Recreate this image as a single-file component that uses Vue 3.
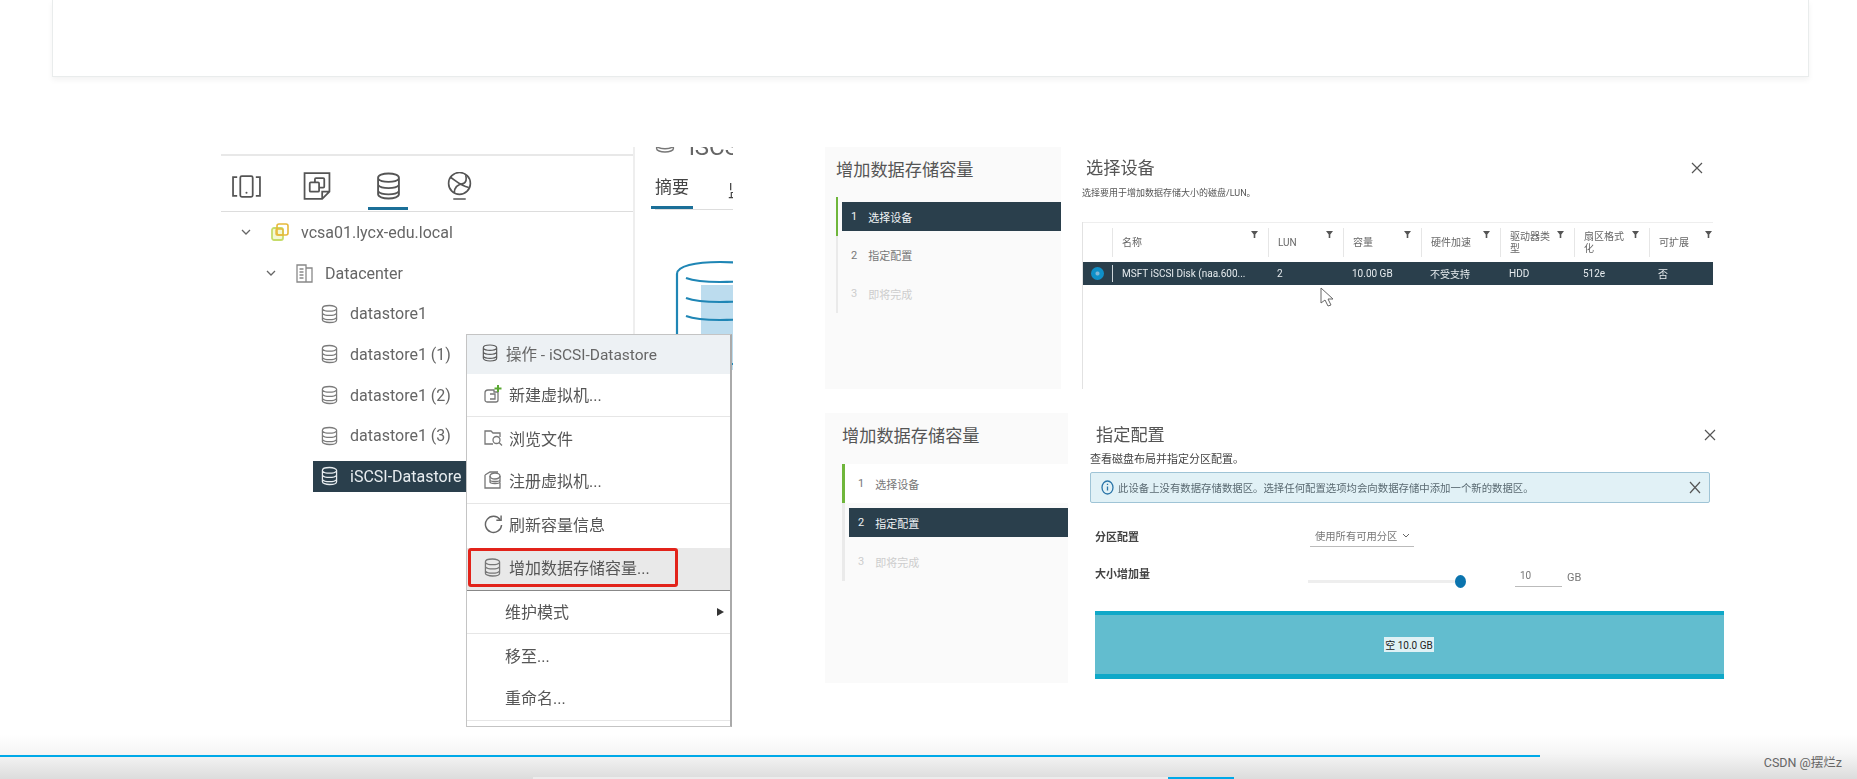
<template>
  <div class="page">
    <svg class="defs" width="0" height="0" aria-hidden="true">
      <defs>
        <symbol id="db" viewBox="0 0 24 26">
          <path d="M2 5c0-2.2 4.5-4 10-4s10 1.800 10 4v16c0 2.200-4.500 4-10 4s-10-1.800-10-4zM2 6c1.500 2 5.500 3 10 3s8.500-1 10-3M2 12c1.500 2 5.500 3 10 3s8.500-1 10-3M2 18c1.500 2 5.500 3 10 3s8.500-1 10-3" fill="none" stroke="currentColor" stroke-width="1.800" />
        </symbol>
      </defs>
    </svg>

    <div class="top-card"></div>

    <div class="content">
      <section class="figure">
        <div class="nav-pane">
          <div class="icon-tabs">
            <span class="icon-tab">
              <svg width="29" height="23" viewBox="0 0 28 22" fill="none" stroke="#555" stroke-width="1.700">
                <path d="M5 2H1v18h4M23 2h4v18h-4" />
                <rect x="8" y="1" width="12" height="20" rx="1.500" />
                <circle cx="14" cy="17" r="1" fill="#555" stroke="none" />
              </svg>
            </span>
            <span class="icon-tab">
              <svg width="28" height="28" viewBox="0 0 26 27" fill="none" stroke="#555" stroke-width="1.700">
                <path d="M1 1h24v18l-7 7H1zM25 19h-7v7" />
                <rect x="11" y="6" width="9" height="9" rx="1" />
                <rect x="6" y="10" width="9" height="9" rx="1" fill="#fff" />
              </svg>
            </span>
            <span class="icon-tab active"><svg class="ic-tab-db"><use href="#db" /></svg></span>
            <span class="icon-tab">
              <svg width="25" height="28" viewBox="0 0 24 27" fill="none" stroke="#555" stroke-width="1.600">
                <circle cx="12" cy="11" r="10.500" />
                <path d="M3 5c4 2 9 8 18 10M7 20c0-5 3-8 9-9 2-1 3-4 2-8M6 26h12" />
              </svg>
            </span>
          </div>

          <ul class="tree">
            <li class="tree-row lvl0">
              <svg class="chev" width="10" height="6" viewBox="0 0 10 6"><path d="M1 1l4 4 4-4" fill="none" stroke="#666" stroke-width="1.300" /></svg>
              <svg class="tree-ic" width="18" height="18" viewBox="0 0 18 18" fill="none">
                <rect x="1" y="5" width="11" height="12" rx="2" fill="#f3f8d4" stroke="#c6dc6a" stroke-width="1.800" />
                <rect x="6" y="1" width="11" height="11" rx="2" stroke="#e6b93a" stroke-width="1.600" />
                <rect x="5" y="6" width="7" height="6" rx="1" stroke="#e6b93a" stroke-width="1.300" />
              </svg>
              <span>vcsa01.lycx-edu.local</span>
            </li>
            <li class="tree-row lvl1">
              <svg class="chev" width="10" height="6" viewBox="0 0 10 6"><path d="M1 1l4 4 4-4" fill="none" stroke="#666" stroke-width="1.300" /></svg>
              <svg class="tree-ic" width="17" height="19" viewBox="0 0 17 19" fill="none" stroke="#888" stroke-width="1.300">
                <path d="M1 1h9v17H1zM10 4h6v14h-6M3.500 5h4M3.500 8h4M3.500 11h4M3.500 14h4" />
              </svg>
              <span>Datacenter</span>
            </li>
            <li v-for="d in datastores" :key="d" class="tree-row lvl2" :class="{ selected: d === 'iSCSI-Datastore' }">
              <span class="tree-label">
                <svg class="ic-db"><use href="#db" /></svg>
                <span>{{ d }}</span>
              </span>
            </li>
          </ul>
        </div>

        <div class="detail-pane">
          <div class="detail-title">
            <svg class="ic-title"><use href="#db" /></svg>
            <span>iSCSI</span>
          </div>
          <div class="detail-tabs">
            <span class="detail-tab">摘要</span>
            <span class="detail-tab-cut">监</span>
          </div>
          <div class="big-db">
            <svg width="90" height="110" viewBox="0 0 90 110" fill="none" stroke="#1f86b5" stroke-width="2.200">
              <rect x="26" y="25" width="48" height="85" fill="#bcdcee" stroke="none" />
              <path d="M2 14C2 6 20 2 45 2s43 4 43 12v90H2zM11 18c8 3 20 4 34 4s26-1 34-4M11 38c8 3 20 4 34 4s26-1 34-4M11 56c8 3 20 4 34 4s26-1 34-4" />
            </svg>
          </div>
        </div>

        <div class="menu">
          <div class="menu-head">
            <svg class="ic-menu-head"><use href="#db" /></svg>
            <span>操作 - iSCSI-Datastore</span>
          </div>
          <div class="menu-row sep">
            <svg class="menu-ic" width="19" height="19" viewBox="0 0 19 19" fill="none" stroke="#777" stroke-width="1.300">
              <path d="M4 6h6v2h4v8a2 2 0 0 1-2 2H3a2 2 0 0 1-2-2V9a3 3 0 0 1 3-3zM6 10h5v5H6" />
              <path d="M14 1v7M10.500 4.500h7" stroke="#5aa832" stroke-width="2" />
            </svg>
            <span>新建虚拟机...</span>
          </div>
          <div class="menu-row">
            <svg class="menu-ic" width="19" height="18" viewBox="0 0 19 18" fill="none" stroke="#777" stroke-width="1.300">
              <path d="M9 15H1V2h6l2 2h7v4" />
              <circle cx="12.500" cy="11" r="3.500" />
              <path d="M15 13.500l3 3" />
            </svg>
            <span>浏览文件</span>
          </div>
          <div class="menu-row sep">
            <svg class="menu-ic" width="19" height="19" viewBox="0 0 19 19" fill="none" stroke="#777" stroke-width="1.300">
              <path d="M1 4l5-3h8M1 4v13h11M16 12v5h-4" />
              <ellipse cx="11" cy="5" rx="5" ry="3" />
              <path d="M6 5v6c0 2 10 2 10 0V5M6 9c0 2 10 2 10 0" />
            </svg>
            <span>注册虚拟机...</span>
          </div>
          <div class="menu-row">
            <svg class="menu-ic" width="20" height="20" viewBox="0 0 20 20" fill="none" stroke="#666" stroke-width="1.500">
              <path d="M17 5.500A8.500 8.500 0 1 0 18.500 11" />
              <path d="M18 1v5h-5" />
            </svg>
            <span>刷新容量信息</span>
          </div>
          <div class="menu-row hot">
            <svg class="ic-menu"><use href="#db" /></svg>
            <span>增加数据存储容量...</span>
            <i class="red-box"></i>
          </div>
          <div class="menu-row plain sep">
            <span>维护模式</span>
            <i class="arrow"></i>
          </div>
          <div class="menu-row plain"><span>移至...</span></div>
          <div class="menu-row plain sep"><span>重命名...</span></div>
        </div>
      </section>

      <div class="wizards">
        <section class="wizard wizard-a">
          <aside class="steps-panel">
            <h3>增加数据存储容量</h3>
            <div class="steps">
              <div v-for="(s, i) in steps" :key="s" class="step" :class="{ green: i === 0, faded: i === 2 }">
                <span class="step-label" :class="{ current: i === 0 }">{{ i + 1 }}<b>{{ s }}</b></span>
              </div>
            </div>
          </aside>
          <div class="wizard-body">
            <div class="body-head">
              <h3>选择设备</h3>
              <svg class="close" width="12" height="12" viewBox="0 0 12 12"><path d="M1 1l10 10M11 1L1 11" stroke="#555" stroke-width="1.200" /></svg>
            </div>
            <p class="sub">选择要用于增加数据存储大小的磁盘/LUN。</p>
            <div class="table">
              <div class="t-head">
                <div class="t-cell radio-col"></div>
                <div v-for="c in columns" :key="c" class="t-cell">
                  <span>{{ c }}</span>
                  <svg class="filter" width="7" height="7" viewBox="0 0 7 7"><path d="M0 0h7L4.300 3.500V7H2.700V3.500z" fill="#555" /></svg>
                </div>
              </div>
              <div class="t-row">
                <div class="t-cell radio-col"><i class="radio"></i></div>
                <div v-for="(v, i) in rowCells" :key="i" class="t-cell" :class="{ bar: i === 0 }">{{ v }}</div>
              </div>
            </div>
            <svg class="cursor" width="16" height="21" viewBox="0 0 16 21" fill="#fff" stroke="#666" stroke-width="1">
              <path d="M1 1v15l4-3 3 6 3-1-3-6h5z" />
            </svg>
          </div>
        </section>

        <section class="wizard wizard-b">
          <aside class="steps-panel">
            <h3>增加数据存储容量</h3>
            <div class="steps">
              <div v-for="(s, i) in steps" :key="s" class="step" :class="{ green: i === 0, faded: i === 2 }">
                <span class="step-label" :class="{ current: i === 1 }">{{ i + 1 }}<b>{{ s }}</b></span>
              </div>
            </div>
          </aside>
          <div class="wizard-body">
            <div class="body-head">
              <h3>指定配置</h3>
              <svg class="close" width="12" height="12" viewBox="0 0 12 12"><path d="M1 1l10 10M11 1L1 11" stroke="#555" stroke-width="1.200" /></svg>
            </div>
            <p class="sub strong">查看磁盘布局并指定分区配置。</p>
            <div class="alert">
              <svg width="13" height="15" viewBox="0 0 13 15" fill="none" stroke="#2b75a8" stroke-width="1.300">
                <ellipse cx="6.500" cy="7.500" rx="5.500" ry="6.500" />
                <path d="M6.500 6.500v4M6.500 3.700v1.200" />
              </svg>
              <span>此设备上没有数据存储数据区。选择任何配置选项均会向数据存储中添加一个新的数据区。</span>
              <svg class="alert-x" width="12" height="13" viewBox="0 0 12 13"><path d="M1 1l10 11M11 1L1 12" stroke="#555" stroke-width="1.200" /></svg>
            </div>
            <div class="form-row first">
              <label>分区配置</label>
              <div class="select">
                <span>使用所有可用分区</span>
                <svg width="8" height="5" viewBox="0 0 8 5"><path d="M1 1l3 3 3-3" fill="none" stroke="#666" /></svg>
              </div>
            </div>
            <div class="form-row second">
              <label>大小增加量</label>
              <div class="slider"><i></i></div>
              <div class="size-input"><span>10</span></div>
              <span class="unit">GB</span>
            </div>
            <div class="free-bar"><span>空 10.0 GB</span></div>
          </div>
        </section>
      </div>
    </div>

    <footer class="player">
      <div class="progress"><i></i></div>
      <div class="watermark">CSDN @摆烂z</div>
      <div class="scroll"><i></i></div>
    </footer>
  </div>
</template>

<script setup>
const datastores = ['datastore1', 'datastore1 (1)', 'datastore1 (2)', 'datastore1 (3)', 'iSCSI-Datastore']
const steps = ['选择设备', '指定配置', '即将完成']
const columns = ['名称', 'LUN', '容量', '硬件加速', '驱动器类型', '扇区格式化', '可扩展']
const rowCells = ['MSFT iSCSI Disk (naa.600...', '2', '10.00 GB', '不受支持', 'HDD', '512e', '否']
</script>

<style scoped>
.page {
  position: relative;
  width: 1857px;
  height: 779px;
  overflow: hidden;
  background: #fff;
  font-family: Roboto, "Noto Sans CJK SC", sans-serif;
  color: #565656;
}

.defs {
  position: absolute;
}

.top-card {
  height: 77px;
  margin: 0 48px 0 52px;
  box-sizing: border-box;
  border: 1px solid #e9ecec;
  border-top: none;
  box-shadow: 0 3px 6px rgba(0, 0, 0, 0.05);
}

.content {
  display: flex;
  height: 580px;
  margin-top: 70px;
  padding-left: 221px;
  filter: blur(0.55px);
}

/* left picture */
.figure {
  position: relative;
  display: flex;
  width: 512px;
  height: 580px;
  overflow: hidden;
}

.nav-pane {
  width: 414px;
  border-right: 2px solid #eee;
  height: 250px;
  flex: none;
  box-sizing: border-box;
}

.icon-tabs {
  display: flex;
  align-items: center;
  height: 58px;
  margin-top: 7px;
  border-top: 2px solid #e8e8e8;
  border-bottom: 1px solid #ddd;
  box-sizing: border-box;
  padding: 5px 0 0 10px;
}

.icon-tab {
  position: relative;
  display: flex;
  justify-content: center;
  width: 30px;
  margin-right: 41px;
}

.icon-tab.active::after {
  content: "";
  position: absolute;
  left: -5px;
  right: -5px;
  bottom: -10px;
  height: 3px;
  background: #1b6f98;
}

.ic-tab-db {
  width: 25px;
  height: 28px;
  color: #555;
}

.tree {
  list-style: none;
  margin: 0;
  padding: 0;
  font-size: 16px;
  color: #666;
}

.tree-row {
  display: flex;
  align-items: center;
  height: 40.7px;
  white-space: nowrap;
}

.lvl0 {
  padding-left: 20px;
}

.lvl1 {
  padding-left: 45px;
}

.lvl2 {
  padding-left: 92px;
}

.chev {
  margin-right: 20px;
}

.tree-ic {
  margin-right: 12px;
}

.tree-label {
  display: flex;
  align-items: center;
  height: 31px;
  width: 153px;
  padding-left: 8px;
  box-sizing: border-box;
}

.ic-db {
  width: 17px;
  height: 20px;
  margin-right: 12px;
  color: #7b7b7b;
  flex: none;
}

.selected .tree-label {
  background: #2a3f4c;
  color: #e8edf0;
}

.selected .ic-db {
  color: #e8edf0;
}

.detail-pane {
  flex: 1;
  overflow: hidden;
  padding-left: 20px;
}

.detail-title {
  display: flex;
  align-items: flex-end;
  height: 8px;
  overflow: hidden;
  font-size: 24px;
  line-height: 1;
  color: #666;
}

.detail-title span {
  margin-left: 14px;
  flex: none;
  transform: translateY(4px);
}

.ic-title {
  width: 20px;
  height: 26px;
  flex: none;
  color: #777;
}

.detail-tabs {
  display: flex;
  height: 55px;
  border-bottom: 1px solid #ddd;
  box-sizing: border-box;
  font-size: 17px;
  color: #444;
  white-space: nowrap;
}

.detail-tab {
  display: flex;
  align-items: flex-end;
  flex: none;
  height: 54px;
  margin-left: -4px;
  padding: 0 4px 8px;
  box-sizing: border-box;
  border-bottom: 3px solid #1b6f98;
}

.detail-tab-cut {
  margin: 22px 0 0 35px;
  flex: none;
}

.big-db {
  margin: 50px 0 0 20px;
  width: 90px;
}

.menu {
  position: absolute;
  left: 245px;
  top: 187px;
  width: 266px;
  height: 393px;
  box-sizing: border-box;
  background: #fff;
  border: 1px solid #c4c4c4;
  border-right: 2px solid #aaa;
  font-size: 16px;
  overflow: hidden;
}

.menu-head {
  display: flex;
  align-items: center;
  height: 39px;
  padding: 0 0 3px 15px;
  box-sizing: border-box;
  background: #edf1f4;
  font-size: 15.500px;
  color: #666;
}

.ic-menu-head {
  width: 16px;
  height: 20px;
  margin-right: 8px;
  color: #5c5c5c;
}

.menu-row {
  position: relative;
  display: flex;
  align-items: center;
  height: 43.4px;
  padding: 0 0 3px 17px;
  box-sizing: border-box;
  white-space: nowrap;
}

.menu-row.sep {
  border-bottom: 1px solid #e6e6e6;
}

.menu-ic {
  width: 19px;
  margin-right: 6px;
  flex: none;
}

.ic-menu {
  width: 17px;
  height: 19px;
  margin-right: 8px;
  color: #777;
  flex: none;
}

.hot {
  background: #e9e9e9;
  border-bottom: 1px solid #888;
}

.red-box {
  position: absolute;
  left: 1px;
  top: 0;
  width: 210px;
  height: 39px;
  box-sizing: border-box;
  border: 3.500px solid #e2231a;
  border-radius: 3px;
}

.plain {
  padding-left: 38px;
}

.arrow {
  position: absolute;
  right: 6px;
  top: 17px;
  border-left: 7px solid #333;
  border-top: 4px solid transparent;
  border-bottom: 4px solid transparent;
}

/* right pictures */
.wizards {
  display: flex;
  flex-direction: column;
  gap: 24px;
  margin-left: 92px;
  width: 899px;
}

.wizard {
  display: flex;
}

.wizard-a {
  height: 242px;
}

.wizard-b {
  height: 270px;
}

.steps-panel {
  flex: none;
  background: #fafafa;
  box-sizing: border-box;
}

.wizard-a .steps-panel {
  width: 236px;
  padding: 12px 0 0 11px;
}

.wizard-b .steps-panel {
  width: 243px;
  padding: 12px 0 0 17px;
}

.steps-panel h3,
.body-head h3 {
  margin: 0;
  font-size: 17.200px;
  line-height: 22px;
  font-weight: 400;
  color: #555;
}

.steps {
  margin-top: 16px;
}

.wizard-b .steps {
  margin-top: 17px;
}

.step {
  height: 38.5px;
  border-left: 2px solid #eaeaea;
  box-sizing: border-box;
  padding-top: 5px;
}

.wizard-b .step {
  height: 39px;
  border-left-width: 3px;
}

.wizard-b .step.green {
  background: #fff;
}

.step.green {
  border-left-color: #6fb63b;
}

.step-label {
  display: flex;
  align-items: center;
  height: 29px;
  margin-left: 4px;
  padding-left: 9px;
  font-size: 11px;
  color: #777;
}

.step-label b {
  margin-left: 11px;
  font-weight: 400;
}

.step-label.current {
  background: #2a3f4c;
  color: #f0f3f5;
}

.step.faded .step-label {
  color: #cdcdcd;
}

.wizard-body {
  position: relative;
  flex: 1;
}

.body-head {
  display: flex;
  justify-content: space-between;
  align-items: center;
}

.wizard-a .wizard-body {
  padding: 10px 0 0 21px;
  box-sizing: border-box;
  width: 652px;
  flex: none;
}

.wizard-a .body-head {
  padding: 0 10px 0 4px;
}

.wizard-b .wizard-body {
  padding: 11px 0 0 22px;
  box-sizing: border-box;
  width: 656px;
  flex: none;
}

.wizard-b .body-head {
  padding: 0 8px 0 6px;
}

.sub {
  margin: 7px 0 0;
  font-size: 9px;
  line-height: 14px;
  color: #555;
}

.sub.strong {
  font-size: 11px;
  margin-top: 7px;
  color: #444;
}

.table {
  margin-top: 22px;
  width: 631px;
  height: 167px;
  border-left: 1px solid #e2e2e2;
  box-sizing: border-box;
  font-size: 10px;
  overflow: hidden;
}

.t-head,
.t-row {
  display: grid;
  grid-template-columns: 29px 156px 75px 78px 79px 74px 75px 64px;
}

.t-head {
  height: 40px;
  border-top: 1px solid #eee;
  box-sizing: border-box;
  color: #666;
  padding-top: 5px;
}

.t-head .t-cell {
  display: flex;
  justify-content: space-between;
  gap: 4px;
  align-items: center;
  height: 29px;
  padding: 0 10px 0 9px;
  box-sizing: border-box;
  border-left: 1px solid #e6e6e6;
  line-height: 12px;
  position: relative;
}

.t-head .radio-col {
  border-left: none;
}

.t-head .t-cell:last-child {
  padding-right: 1px;
}

.filter {
  flex: none;
  align-self: flex-start;
  margin-top: 3px;
}

.t-row {
  height: 23px;
  align-items: center;
  background: #2a3f4c;
  color: #e6ebee;
}

.t-row .t-cell {
  padding-left: 9px;
  white-space: nowrap;
  overflow: hidden;
  display: flex;
  align-items: center;
  height: 17px;
  box-sizing: border-box;
}

.t-row .t-cell.bar {
  border-left: 1px solid #cfd6da;
}

.t-row .radio-col {
  padding-left: 8px;
}

.radio {
  width: 13px;
  height: 13px;
  border-radius: 50%;
  background: radial-gradient(circle, #7fb6d6 0 1.5px, #0f90c8 2.5px);
}

.cursor {
  position: absolute;
  left: 259px;
  top: 140px;
}

.alert {
  display: flex;
  align-items: center;
  height: 31px;
  margin-top: 5px;
  width: 620px;
  padding-left: 10px;
  box-sizing: border-box;
  background: #e1f1f6;
  border: 1px solid #9fc4d6;
  border-radius: 2px;
  font-size: 10.400px;
  white-space: nowrap;
  color: #5a6a72;
}

.alert > span {
  margin-left: 4px;
  flex: 1;
}

.alert-x {
  margin-right: 8px;
}

.form-row {
  position: relative;
  display: flex;
  align-items: center;
  font-size: 11px;
}

.form-row label {
  width: 215px;
  margin-left: 5px;
  font-weight: 700;
  color: #444;
  flex: none;
}

.form-row.first {
  height: 26px;
  margin-top: 20px;
}

.form-row.second {
  height: 28px;
  margin-top: 10px;
}

.select {
  display: flex;
  align-items: center;
  justify-content: space-between;
  width: 104px;
  height: 22px;
  padding: 0 4px 0 5px;
  box-sizing: border-box;
  border-bottom: 1px solid #bbb;
  color: #777;
  font-size: 10.300px;
}

.slider {
  position: relative;
  width: 152px;
  height: 3px;
  margin-top: 16px;
  margin-left: -2px;
  background: #eee;
}

.slider i {
  position: absolute;
  right: -6px;
  top: -5px;
  width: 11px;
  height: 13px;
  border-radius: 50%;
  background: #0b74ae;
}

.size-input {
  width: 47px;
  height: 20px;
  margin-left: 55px;
  margin-top: 7px;
  padding: 3px 0 0 5px;
  box-sizing: border-box;
  border-bottom: 1px solid #bbb;
  color: #777;
  font-size: 10px;
}

.unit {
  margin-left: 5px;
  font-size: 11px;
  color: #777;
  margin-top: 9px;
}

.free-bar {
  display: flex;
  align-items: center;
  justify-content: center;
  width: 629px;
  height: 68px;
  margin: 24px 0 0 5px;
  box-sizing: border-box;
  background: #62bdcf;
  border-top: 4px solid #0fa8c8;
  border-bottom: 5px solid #0fa8c8;
  font-size: 10px;
  color: #222;
}

.free-bar span {
  background: #dff1f5;
  padding: 0 1px;
  margin-right: 1px;
}

/* bottom of the page */
.player {
  position: relative;
  height: 52px;
  background: linear-gradient(#fff 0, #fff 8px, #f6f6f6 26px, #dcdcdc 100%);
}

.progress {
  position: absolute;
  left: 0;
  top: 28px;
  width: 1638px;
  height: 2px;
  background: #f3f3f3;
}

.progress i {
  display: block;
  width: 1540px;
  height: 2px;
  background: #00a9e8;
}

.watermark {
  position: absolute;
  right: 15px;
  top: 28px;
  font-size: 12.500px;
  line-height: 16px;
  color: #666;
}

.scroll {
  position: absolute;
  left: 533px;
  bottom: 0;
  width: 701px;
  height: 2px;
  background: #ececec;
}

.scroll i {
  position: absolute;
  right: 0;
  width: 66px;
  height: 2px;
  background: #00a9e8;
}
</style>

<style>
html,
body {
  margin: 0;
  overflow: hidden;
}
</style>
